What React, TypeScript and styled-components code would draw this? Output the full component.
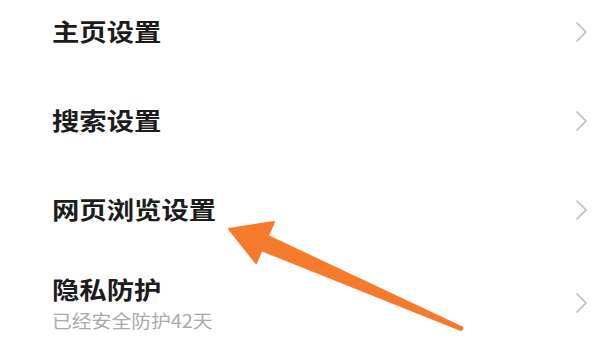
import React from 'react'
import styled, { createGlobalStyle } from 'styled-components'

const GlobalStyle = createGlobalStyle`
  html, body {
    margin: 0;
    padding: 0;
    background: #ffffff;
  }
  body {
    width: 602px;
    height: 352px;
    overflow: hidden;
    font-family: "Noto Sans CJK SC", "Noto Sans", sans-serif;
  }
`

const Page = styled.div`
  position: relative;
  width: 602px;
  height: 352px;
  overflow: hidden;
`

const List = styled.ul`
  list-style: none;
  margin: -14px 0 0;
  padding: 0;
  display: flex;
  flex-direction: column;
`

const Row = styled.li<{ tall?: boolean }>`
  display: flex;
  align-items: center;
  justify-content: space-between;
  height: ${({ tall }) => (tall ? '100px' : '89px')};
  padding: 0 15px 0 52px;
`

const TextBlock = styled.div`
  display: flex;
  flex-direction: column;
  gap: 4px;
`

const Title = styled.span`
  display: inline-block;
  font-size: 24px;
  line-height: 30px;
  font-weight: 700;
  color: #1c1c1c;
  transform: scaleX(1.14);
  transform-origin: left center;
  white-space: nowrap;
`

const Subtitle = styled.span`
  display: inline-block;
  font-size: 18px;
  line-height: 24px;
  color: #a9a9a9;
  transform: scaleX(1.1);
  transform-origin: left center;
  white-space: nowrap;
`

const Chevron = styled.svg<{ lift?: boolean }>`
  width: 11px;
  height: 20px;
  flex: none;
  margin-top: ${({ lift }) => (lift ? '2px' : '0')};
`

const Arrow = styled.svg`
  position: absolute;
  left: 0;
  top: 0;
  width: 602px;
  height: 352px;
  pointer-events: none;
`

const items = [
  { title: '主页设置' },
  { title: '搜索设置' },
  { title: '网页浏览设置' },
  { title: '隐私防护', sub: '已经安全防护42天' },
]

const ChevronIcon: React.FC<{ lift?: boolean }> = ({ lift }) => (
  <Chevron viewBox="0 0 11 20" lift={lift}>
    <path d="M1 1 L10 10 L1 19" fill="none" stroke="#bdbdbd" strokeWidth="1.7" strokeLinecap="round" strokeLinejoin="round" />
  </Chevron>
)

const App: React.FC = () => {
  return (
    <Page>
      <GlobalStyle />
      <List>
        {items.map((item, index) => (
          <Row key={index} tall={!!item.sub}>
            <TextBlock>
              <Title>{item.title}</Title>
              {item.sub && <Subtitle>{item.sub}</Subtitle>}
            </TextBlock>
            <ChevronIcon lift={!item.sub} />
          </Row>
        ))}
      </List>
      <Arrow viewBox="0 0 602 352">
        <polygon points="229,229 274,222 256,263" fill="#f57a2b" strokeLinejoin="round" stroke="#f57a2b" strokeWidth="2" />
        <polygon points="258.6,230.6 462,326.2 460,330.8 251.4,247.2" fill="#f57a2b" />
        <circle cx="461" cy="328.5" r="2.4" fill="#f57a2b" />
      </Arrow>
    </Page>
  )
}

export default App
